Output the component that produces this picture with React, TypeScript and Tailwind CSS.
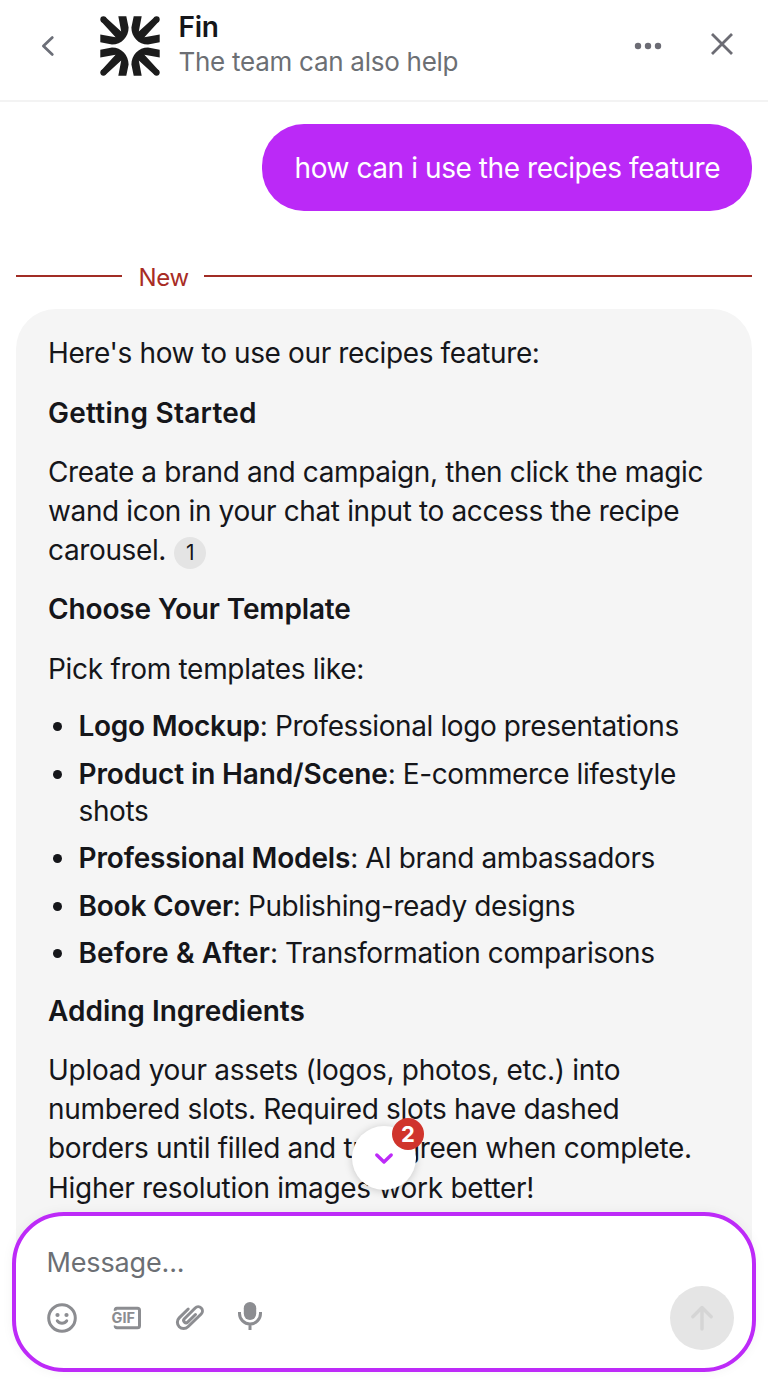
import { ReactNode } from "react";

function Para({ children, className = "" }: { children: ReactNode; className?: string }) {
  return <p className={`leading-[39.2px] whitespace-nowrap ${className}`}>{children}</p>;
}

function Heading({ children, className = "" }: { children: ReactNode; className?: string }) {
  return <h2 className={`leading-[39.2px] font-semibold whitespace-nowrap ${className}`}>{children}</h2>;
}

function Item({ name, tracking, children }: { name: string; tracking: string; children: ReactNode }) {
  return (
    <li className="flex leading-[37px] tracking-[-0.4px] whitespace-nowrap">
      <span className="mt-[14px] mr-[16.5px] ml-[5px] size-[9px] shrink-0 rounded-full bg-[#15161a]" />
      <span>
        <b className={`font-semibold ${tracking}`}>{name}</b>: {children}
      </span>
    </li>
  );
}

function LogoArm({ transform }: { transform?: string }) {
  return (
    <g transform={transform}>
      <path d="M1.2 5.6 L5.6 1.2 L21.2 15.6 L18.3 .3 H26.3 L28.6 11.5 C28.6 21 21.5 28.6 12 28.6 L.3 26.2 V18.4 L15.6 21.2 Z" />
      <circle cx="3.4" cy="3.4" r="3.1" />
    </g>
  );
}

function Logo() {
  return (
    <svg className="size-[60px]" viewBox="0 0 60 60" fill="#1c1c1c">
      <LogoArm />
      <LogoArm transform="translate(60 0) scale(-1 1)" />
      <LogoArm transform="translate(0 60) scale(1 -1)" />
      <LogoArm transform="translate(60 60) scale(-1 -1)" />
    </svg>
  );
}

function Header() {
  return (
    <header className="flex h-[102px] shrink-0 items-start border-b-2 border-[#f3f3f3]">
      <svg className="mt-[34px] ml-[38px] size-6" viewBox="0 0 24 24" fill="none" stroke="#6c6f78" strokeWidth="2.8" strokeLinecap="round" strokeLinejoin="round">
        <path d="M14.3 3.6 5.4 12l8.9 8.4" />
      </svg>
      <div className="mt-4 ml-[38px]">
        <Logo />
      </div>
      <div className="mt-[9px] ml-[18.5px] flex-1 whitespace-nowrap">
        <div className="text-[28px] leading-9 font-semibold tracking-[-0.3px]">Fin</div>
        <div className="-mt-px text-[26px] leading-9 tracking-[-0.27px] text-[#6c6f74]">The team can also help</div>
      </div>
      <svg className="mt-8 mr-12 h-7 w-7" viewBox="0 0 28 28" fill="#6c6c74">
        <circle cx="4" cy="14" r="3.2" />
        <circle cx="14" cy="14" r="3.2" />
        <circle cx="24" cy="14" r="3.2" />
      </svg>
      <svg className="mt-8 mr-[34px] size-6" viewBox="0 0 24 24" fill="none" stroke="#6c6c74" strokeWidth="2.8">
        <path d="M2 2l20 20M22 2 2 22" />
      </svg>
    </header>
  );
}

function Composer() {
  return (
    <div className="absolute top-[1212px] right-3 left-3 flex h-40 flex-col rounded-[52px] border-4 border-[#bd2af8] bg-white shadow-[0_0_12px_rgba(0,0,0,0.05)]">
      <div className="mt-[29px] ml-[30.5px] text-[27px] leading-9 tracking-[-0.15px] text-[#6c6f74]">Message...</div>
      <div className="mt-[5px] flex items-center pr-[18px] pl-[30px] text-[#8c8d91]">
        <svg className="size-8" viewBox="0 0 32 32" fill="none" stroke="currentColor" strokeWidth="3">
          <circle cx="16" cy="16" r="13.3" />
          <circle cx="11.5" cy="13" r="2.1" fill="currentColor" stroke="none" />
          <circle cx="20.5" cy="13" r="2.1" fill="currentColor" stroke="none" />
          <path d="M11.3 18.8c2.2 3.2 7.2 3.2 9.4 0" strokeLinecap="round" />
        </svg>
        <svg className="ml-8 size-8" viewBox="0 0 32 32" fill="none" stroke="currentColor" strokeWidth="3">
          <path d="M5.3 8.8C5 7.2 5.6 6.3 7 6.3h20.5a2 2 0 0 1 2 2v15.5a2 2 0 0 1-2 2H7c-1.4 0-2-.9-1.7-2.1" />
          <text x="1.6" y="21.2" fontSize="14.5" fontWeight="700" fill="currentColor" stroke="none" fontFamily="Inter" textLength="23.5">GIF</text>
        </svg>
        <svg className="ml-8 size-8" viewBox="0 0 32 32" fill="none" stroke="currentColor" strokeWidth="3" strokeLinecap="round" strokeLinejoin="round">
          <path d="M14.2 7 5.2 15.9a6.2 6.2 0 0 0 8.8 8.8L27.2 12a4.2 4.2 0 0 0-6-6L10.4 16.8a2.3 2.3 0 0 0 3.3 3.3L21.5 12.5" />
        </svg>
        <svg className="ml-7 size-8" viewBox="0 0 32 32" fill="none" stroke="currentColor" strokeWidth="3">
          <rect x="9.8" y="0" width="12.4" height="18" rx="6.2" fill="currentColor" stroke="none" />
          <path d="M5.5 10v1.5a10.5 10.5 0 0 0 21 0V10M16 22v6" />
        </svg>
        <div className="ml-auto flex size-16 items-center justify-center rounded-full bg-[#e5e5e5]">
          <svg className="size-8" viewBox="0 0 32 32" fill="none" stroke="#d5d5d5" strokeWidth="3.4" strokeLinecap="round" strokeLinejoin="round">
            <path d="M16 27V5.5M6.8 14.7 16 5.5l9.2 9.2" />
          </svg>
        </div>
      </div>
    </div>
  );
}

export default function App() {
  return (
    <div className="relative flex h-[1384px] w-[768px] flex-col overflow-hidden bg-white font-['Inter',sans-serif] text-[28px] text-[#15161a]">
      <Header />
      <main className="flex flex-1 flex-col px-4">
        <div className="mt-[22px] flex h-[87px] w-[490px] items-center self-end rounded-[42px] bg-[#bb29f7] pt-px pl-[32.5px] tracking-[-0.42px] whitespace-nowrap text-white">
          <span>how can i use the recipes feature</span>
        </div>
        <div className="mt-[49px] flex h-8 items-center text-[24px] tracking-[-0.3px] text-[#a82c25]">
          <span className="h-0.5 w-[106px] bg-[#a12d25]" />
          <span className="ml-[16.5px] pt-1">New</span>
          <span className="ml-auto h-0.5 w-[548px] bg-[#a12d25]" />
        </div>
        <section className="mt-[17px] h-[991px] rounded-t-[40px] bg-[#f5f5f5] px-8 pt-[25.4px]">
          <Para className="tracking-[-0.38px]">Here's how to use our recipes feature:</Para>
          <Heading className="mt-5 tracking-[0.25px]">Getting Started</Heading>
          <Para className="mt-5 tracking-[-0.37px]">
            Create a brand and campaign, then click the magic
            <br />
            wand icon in your chat input to access the recipe
            <br />
            carousel.
            <span className="ml-2 inline-flex size-8 items-center justify-center rounded-full bg-[#e4e4e4] align-middle text-[21px]">1</span>
          </Para>
          <Heading className="mt-5 tracking-[-0.14px]">Choose Your Template</Heading>
          <Para className="mt-5 tracking-[-0.3px]">Pick from templates like:</Para>
          <ul className="mt-[19.5px] flex flex-col gap-[10.5px]">
            <Item name="Logo Mockup" tracking="tracking-[-0.27px]">Professional logo presentations</Item>
            <Item name="Product in Hand/Scene" tracking="tracking-[-0.13px]">
              E-commerce lifestyle
              <br />
              shots
            </Item>
            <Item name="Professional Models" tracking="tracking-[-0.16px]">AI brand ambassadors</Item>
            <Item name="Book Cover" tracking="tracking-[-0.2px]">Publishing-ready designs</Item>
            <Item name="Before & After" tracking="tracking-[0.15px]">Transformation comparisons</Item>
          </ul>
          <Heading className="mt-[19.5px]">Adding Ingredients</Heading>
          <Para className="mt-5 tracking-[-0.33px]">
            <span className="tracking-[-0.27px]">Upload your assets (logos, photos, etc.) into</span>
            <br />
            numbered slots. Required slots have dashed
            <br />
            borders until filled and turn green when complete.
            <br />
            <span className="tracking-[-0.29px]">Higher resolution images work better!</span>
          </Para>
        </section>
      </main>
      <Composer />
      <div className="absolute top-[1126px] left-[352px] flex size-16 items-center justify-center rounded-full bg-white shadow-[0_1px_8px_rgba(0,0,0,0.18)]">
        <svg className="size-6" viewBox="0 0 24 24" fill="none" stroke="#bd2af8" strokeWidth="3.4" strokeLinecap="round" strokeLinejoin="round">
          <path d="M4.8 9 12 16l7.2-7" />
        </svg>
        <span className="absolute top-[-8px] left-10 flex size-8 items-center justify-center rounded-full bg-[#d0342c] text-[22px] font-bold text-white">2</span>
      </div>
    </div>
  );
}
